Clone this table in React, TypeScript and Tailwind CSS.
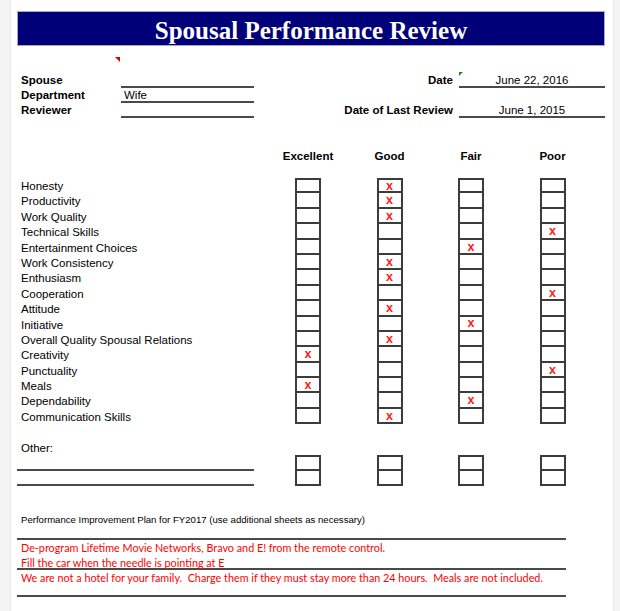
import React from 'react'

type Rating = 0 | 1 | 2 | 3

const criteria: { label: string; mark: Rating }[] = [
    { label: 'Honesty', mark: 1 },
    { label: 'Productivity', mark: 1 },
    { label: 'Work Quality', mark: 1 },
    { label: 'Technical Skills', mark: 3 },
    { label: 'Entertainment Choices', mark: 2 },
    { label: 'Work Consistency', mark: 1 },
    { label: 'Enthusiasm', mark: 1 },
    { label: 'Cooperation', mark: 3 },
    { label: 'Attitude', mark: 1 },
    { label: 'Initiative', mark: 2 },
    { label: 'Overall Quality Spousal Relations', mark: 1 },
    { label: 'Creativity', mark: 0 },
    { label: 'Punctuality', mark: 3 },
    { label: 'Meals', mark: 0 },
    { label: 'Dependability', mark: 2 },
    { label: 'Communication Skills', mark: 1 },
]

const columns = ['Excellent', 'Good', 'Fair', 'Poor']

const Box = ({ first, checked }: { first: boolean; checked: boolean }) => (
    <div
        className={`w-[26px] h-full flex items-center justify-center border-x-2 border-b-2 border-[#3c3c3c] ${
            first ? 'border-t-2' : ''
        }`}
    >
        {checked && <span className="text-[12.5px] leading-none font-bold text-[#ff1a1a] pt-[1px]">x</span>}
    </div>
)

const BoxRow = ({ first, mark }: { first: boolean; mark?: Rating }) => (
    <div className="flex gap-[55.5px] h-full">
        {columns.map((c, i) => (
            <Box key={c} first={first} checked={mark === i} />
        ))}
    </div>
)

export default function App() {
    return (
        <div
            className="w-[620px] h-[611px] flex bg-white overflow-hidden text-black"
            style={{ fontFamily: '"Liberation Sans", Arial, sans-serif' }}
        >
            <div className="w-[11px] bg-[#f4f4f4] border-r border-[#e8e8e8]" />
            <div className="w-[602px] pl-[6px] pr-[8px] pt-[11px] flex flex-col">
                <div className="h-[35px] pt-[3px] bg-[#000078] border border-[#a6a6d4] flex items-center justify-center">
                    <h1
                        className="text-white font-bold text-[25px] leading-none"
                        style={{ fontFamily: '"Liberation Serif", "Times New Roman", serif' }}
                    >
                        Spousal Performance Review
                    </h1>
                </div>

                <div className="relative mt-[27px] flex justify-between text-[11.5px] font-bold">
                    <span className="absolute left-[98px] -top-[16px] w-0 h-0 border-t-[5px] border-t-[#e00000] border-l-[5px] border-l-transparent" />
                    <div className="flex flex-col">
                        {['Spouse', 'Department', 'Reviewer'].map((l, i) => (
                            <div key={l} className="flex h-[15px]">
                                <div className="w-[104px] pl-[4px] leading-[15px]">{l}</div>
                                <div className="w-[133px] border-b-2 border-[#4a4a4a] pl-[3px] font-normal leading-[14px]">
                                    {i === 1 ? 'Wife' : ''}
                                </div>
                            </div>
                        ))}
                    </div>
                    <div className="flex flex-col">
                        {[
                            ['Date', 'June 22, 2016'],
                            ['', ''],
                            ['Date of Last Review', 'June 1, 2015'],
                        ].map(([l, v], i) => (
                            <div key={i} className="flex h-[15px] justify-end">
                                <div className="pr-[6px] leading-[15px] whitespace-nowrap">{l}</div>
                                <div
                                    className={`relative w-[146px] text-center font-normal leading-[14px] ${
                                        v ? 'border-b-2 border-[#4a4a4a]' : ''
                                    }`}
                                >
                                    {i === 0 && (
                                        <span className="absolute left-0 -top-[1px] w-0 h-0 border-t-[4px] border-t-[#1a8a1a] border-r-[4px] border-r-transparent" />
                                    )}
                                    {v}
                                </div>
                            </div>
                        ))}
                    </div>
                </div>

                <div className="mt-[30px] h-[16px] flex text-[11.5px] font-bold">
                    <div className="w-[278px]" />
                    <div className="flex gap-[55.5px]">
                        {columns.map(c => (
                            <div key={c} className="w-[26px] flex justify-center leading-[16px] whitespace-nowrap">
                                {c}
                            </div>
                        ))}
                    </div>
                </div>

                <div className="mt-[14px] flex flex-col text-[11.5px]">
                    {criteria.map((c, i) => (
                        <div key={c.label} className="flex h-[15.4px]">
                            <div className="w-[278px] pl-[4px] leading-[16px] whitespace-nowrap">{c.label}</div>
                            <BoxRow first={i === 0} mark={c.mark} />
                        </div>
                    ))}
                </div>

                <div className="mt-[16px] h-[15px] pl-[4px] text-[11.5px] leading-[16px]">Other:</div>
                <div className="flex flex-col">
                    {[0, 1].map(i => (
                        <div key={i} className="flex h-[15.4px]">
                            <div className="w-[278px] flex">
                                <div className="w-[237px] border-b-2 border-[#4a4a4a]" />
                            </div>
                            <BoxRow first={i === 0} />
                        </div>
                    ))}
                </div>

                <div className="mt-[27px] h-[14px] pl-[4px] text-[9.6px] leading-[14px] whitespace-nowrap">
                    Performance Improvement Plan for FY2017 (use additional sheets as necessary)
                </div>
                <div
                    className="w-[549px] flex flex-col text-[#ff0000] text-[10.8px]"
                    style={{ fontFamily: 'Lato, "Noto Sans", sans-serif' }}
                >
                    <div className="h-[13px] border-b-2 border-[#4a4a4a]" />
                    <div className="h-[15px] pl-[4px] leading-[16px] whitespace-nowrap">
                        De-program Lifetime Movie Networks, Bravo and E! from the remote control.
                    </div>
                    <div className="h-[15px] pl-[4px] leading-[15px] whitespace-nowrap border-b-2 border-[#4a4a4a]">
                        Fill the car when the needle is pointing at E
                    </div>
                    <div className="h-[27px] pl-[4px] leading-[16px] whitespace-pre border-b-2 border-[#4a4a4a]">
                        We are not a hotel for your family.  Charge them if they must stay more than 24 hours.  Meals are not included.
                    </div>
                </div>
            </div>
            <div className="w-[7px] bg-[#f4f4f4] border-l border-[#e8e8e8]" />
        </div>
    )
}
